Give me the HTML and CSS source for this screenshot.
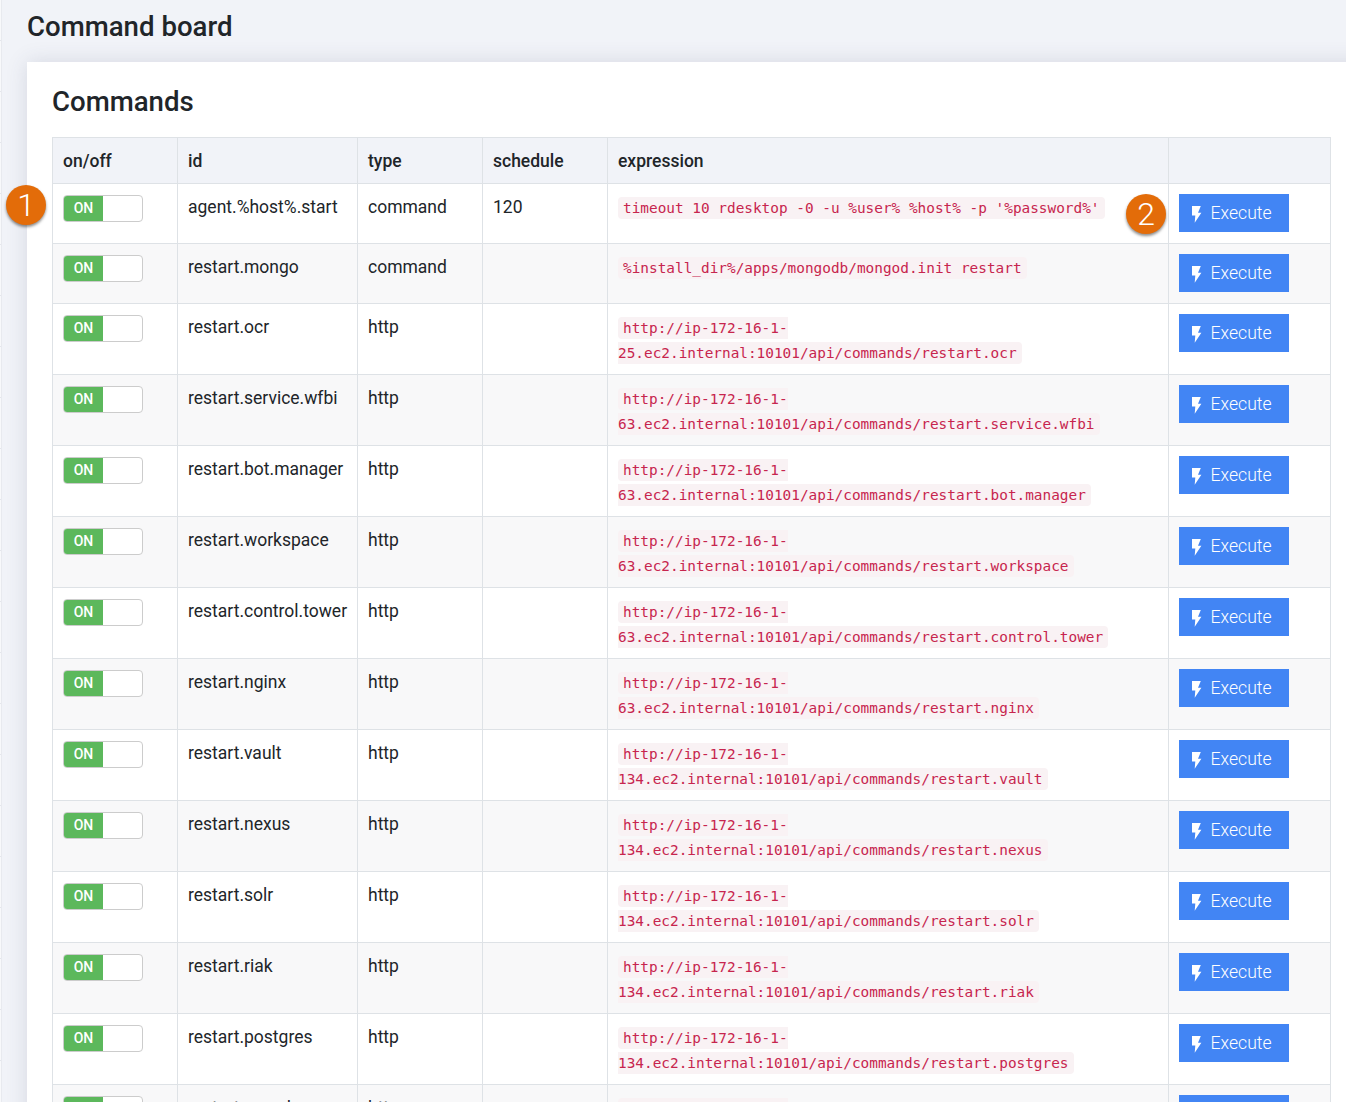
FILE: index.html
```html
<!DOCTYPE html>
<html lang="en">
<head>
    <meta charset="UTF-8">
    <title>Command board</title>
    <link rel="stylesheet" href="styles.css">
</head>
<body>
    <div class="sidebar-edge"></div>
    <div class="content">
        <h1>Command board</h1>
        <div class="card">
            <h2>Commands</h2>
            <table>
                <colgroup>
                    <col class="col-toggle"><col class="col-id"><col class="col-type"><col class="col-schedule"><col class="col-expr"><col class="col-action">
                </colgroup>
                <thead>
                    <tr><th>on/off</th><th>id</th><th>type</th><th>schedule</th><th>expression</th><th></th></tr>
                </thead>
                <tbody id="rows"></tbody>
            </table>
            <span class="marker marker-one">1</span>
            <span class="marker marker-two">2</span>
        </div>
    </div>
    <script>
        var commands = [
            ['agent.%host%.start', 'command', '120', "timeout 10 rdesktop -0 -u %user% %host% -p '%password%'"],
            ['restart.mongo', 'command', '', '%install_dir%/apps/mongodb/mongod.init restart'],
            ['restart.ocr', 'http', '', 'http://ip-172-16-1-25.ec2.internal:10101/api/commands/restart.ocr'],
            ['restart.service.wfbi', 'http', '', 'http://ip-172-16-1-63.ec2.internal:10101/api/commands/restart.service.wfbi'],
            ['restart.bot.manager', 'http', '', 'http://ip-172-16-1-63.ec2.internal:10101/api/commands/restart.bot.manager'],
            ['restart.workspace', 'http', '', 'http://ip-172-16-1-63.ec2.internal:10101/api/commands/restart.workspace'],
            ['restart.control.tower', 'http', '', 'http://ip-172-16-1-63.ec2.internal:10101/api/commands/restart.control.tower'],
            ['restart.nginx', 'http', '', 'http://ip-172-16-1-63.ec2.internal:10101/api/commands/restart.nginx'],
            ['restart.vault', 'http', '', 'http://ip-172-16-1-134.ec2.internal:10101/api/commands/restart.vault'],
            ['restart.nexus', 'http', '', 'http://ip-172-16-1-134.ec2.internal:10101/api/commands/restart.nexus'],
            ['restart.solr', 'http', '', 'http://ip-172-16-1-134.ec2.internal:10101/api/commands/restart.solr'],
            ['restart.riak', 'http', '', 'http://ip-172-16-1-134.ec2.internal:10101/api/commands/restart.riak'],
            ['restart.postgres', 'http', '', 'http://ip-172-16-1-134.ec2.internal:10101/api/commands/restart.postgres'],
            ['restart.mysql', 'http', '', 'http://ip-172-16-1-134.ec2.internal:10101/api/commands/restart.mysql']
        ];

        var bolt = '<svg class="bolt" viewBox="0 0 10 17"><path d="M0 0H8.8L6 6.7H9.4L2.7 16.8L3.3 9.4H0Z"/></svg>';
        var html = '';
        commands.forEach(function(c) {
            html += '<tr>' +
                '<td><div class="toggle"><span class="toggle-on">ON</span></div></td>' +
                '<td class="cell-text">' + c[0] + '</td><td class="cell-text">' + c[1] + '</td><td class="cell-text">' + c[2] + '</td>' +
                '<td class="cell-code"><code>' + c[3] + '</code></td>' +
                '<td><button type="button">' + bolt + 'Execute</button></td></tr>';
        });
        document.getElementById('rows').innerHTML = html;
    </script>
</body>
</html>
```
FILE: styles.css
```css
html, body {
    height: 100%;
}

body {
    margin: 0;
    overflow: hidden;
    background-color: #f1f3f8;
    font-family: Roboto, sans-serif;
    color: #212529;
    display: flex;
}

.sidebar-edge {
    width: 1px;
    flex: none;
    background: repeating-linear-gradient(to bottom, #f8f9fb 0, #f8f9fb 40px, #e4e6ec 40px, #e4e6ec 41px, #f8f9fb 41px, #f8f9fb 51px);
    border-right: 1px solid #e8eaef;
}

.content {
    padding-left: 25px;
    flex: none;
    width: 1344px;
}

h1 {
    margin: 0;
    padding-top: 10px;
    height: 62px;
    box-sizing: border-box;
    font-size: 27.6px;
    line-height: 34px;
    font-weight: 500;
}

.card {
    position: relative;
    width: 1329px;
    padding: 25px;
    background-color: white;
    box-shadow: 0 0 20px rgba(60, 70, 100, 0.15);
}

h2 {
    margin: 0 0 20px;
    font-size: 27.6px;
    line-height: 30px;
    font-weight: 500;
}

table {
    width: 1279px;
    table-layout: fixed;
    border-collapse: collapse;
    font-size: 17.5px;
    line-height: 25px;
}

.col-toggle, .col-type, .col-schedule { width: 125px; }
.col-id { width: 180px; }
.col-expr { width: 561px; }
.col-action { width: 162px; }

th, td {
    border: 1px solid #dee2e6;
    padding: 10px;
    text-align: left;
    vertical-align: top;
}

th {
    background-color: #f1f3f8;
    font-weight: 500;
    padding-top: 11px;
    padding-bottom: 9px;
}

td.cell-text {
    padding-top: 11px;
    padding-bottom: 9px;
}

td.cell-code {
    padding-top: 11px;
    padding-bottom: 9px;
}

tbody tr:nth-child(even) {
    background-color: #f8f8f9;
}

code {
    font-family: "DejaVu Sans Mono", monospace;
    font-size: 14.4px;
    line-height: 1;
    color: #c7254e;
    background-color: #f9f2f4;
    padding: 3px 5px;
    border-radius: 4px;
}

.toggle {
    width: 80px;
    height: 27px;
    margin-top: 1px;
    box-sizing: border-box;
    border: 1px solid #ccc;
    border-radius: 4px;
    overflow: hidden;
    background-color: white;
}

.toggle-on {
    display: block;
    width: 39px;
    height: 100%;
    background-color: #5cb85c;
    color: white;
    font-size: 14px;
    font-weight: 500;
    line-height: 24px;
    text-align: center;
}

button {
    display: flex;
    align-items: center;
    width: 110px;
    height: 38px;
    margin-bottom: 1px;
    padding: 0 0 0 13px;
    border: none;
    background-color: #4285f4;
    color: white;
    font-family: Roboto, sans-serif;
    font-size: 17.6px;
    font-weight: 300;
    cursor: pointer;
}

.bolt {
    width: 10px;
    height: 17px;
    margin: 2px 8.6px 0 0;
    fill: white;
}

.marker {
    position: absolute;
    width: 40px;
    height: 40px;
    border-radius: 50%;
    background-color: #e36c09;
    color: white;
    font-size: 32px;
    font-weight: 300;
    line-height: 40px;
    text-align: center;
    box-shadow: 0 2px 3px rgba(0, 0, 0, 0.45);
}

.marker-one {
    left: -21px;
    top: 123px;
}

.marker-two {
    left: 1099px;
    top: 132px;
}
```
